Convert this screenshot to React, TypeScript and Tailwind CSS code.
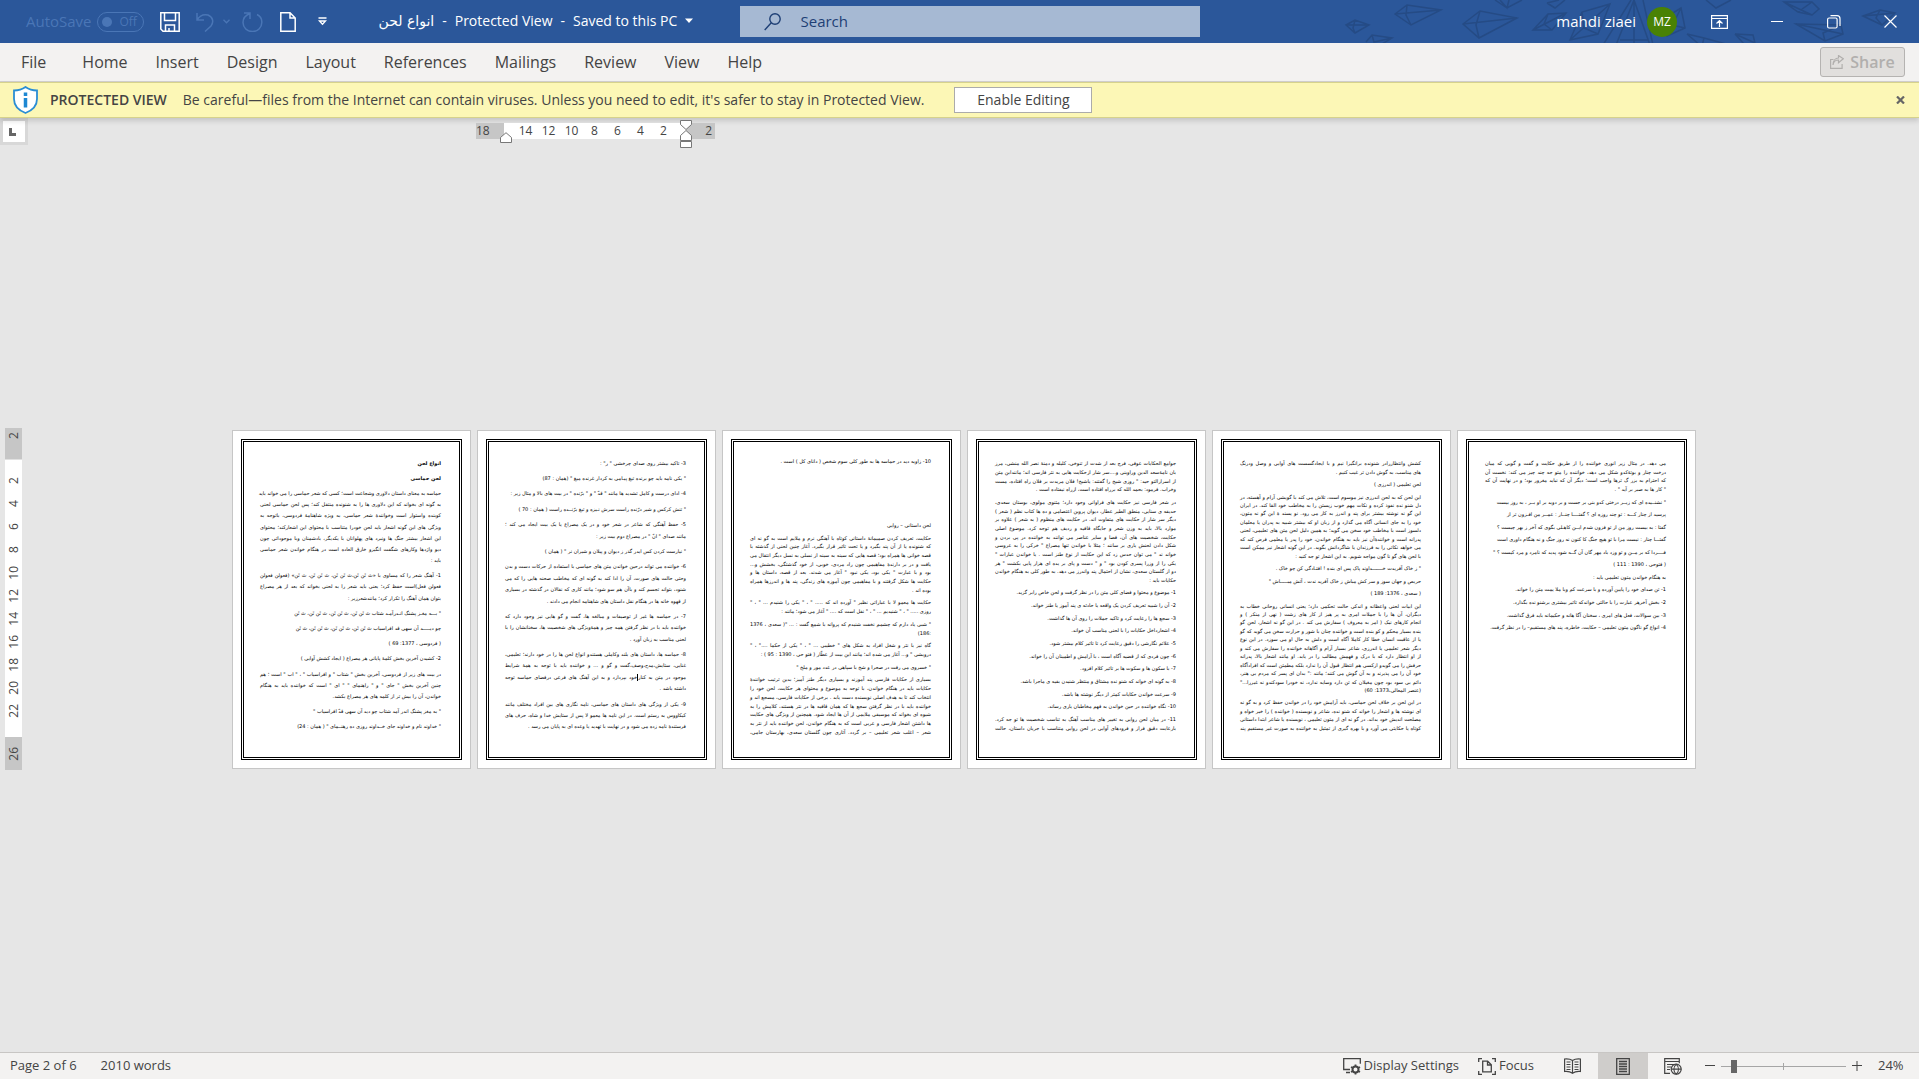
import { useState } from 'react';
import clsx from 'clsx';

type Paragraph = {
  lines: string[];
  bold?: boolean;
  // the paragraph runs on to the next page, so its last line is justified too
  runsOn?: boolean;
};

type DocPage = { spacing: 'wide' | 'full' | 'tight'; paragraphs: Paragraph[] };

const tabs = ['File', 'Home', 'Insert', 'Design', 'Layout', 'References', 'Mailings', 'Review', 'View', 'Help'];
const rulerColumns = [14, 12, 10, 8, 6, 4, 2];
const rulerRows = [2, 4, 6, 8, 10, 12, 14, 16, 18, 20, 22];

const blank = (count: number): Paragraph[] => Array.from({ length: count }, () => ({ lines: [''] }));

const pages: DocPage[] = [
  {
    spacing: 'wide',
    paragraphs: [
      { lines: ['انواع لحن'], bold: true },
      { lines: ['لحن حماسی'], bold: true },
      {
        lines: [
          'حماسه به معنای داستان دلاوری وشجاعت است؛ کسی که شعر حماسی را می خواند باید',
          'به گونه ای بخواند که این دلاوری ها را به شنونده منتقل کند؛ پس لحن حماسی لحنی',
          'کوبنده واستوار است وخوانندۀ شعر حماسی، به ویژه شاهنامۀ فردوسی، باتوجه به',
          'ویژگی های این گونه اشعار باید لحن خودرا متناسب با محتوای این اشعارکند؛ محتوای',
          'این اشعار بیشتر جنگ ها ونبرد های پهلوانان با یکدیگر، بادشمنان وبا موجوداتی چون',
          'دیو واژدها وکارهای شگفت انگیزو خارق العاده است در هنگام خواندن شعر حماسی',
          'باید :',
        ],
      },
      {
        lines: [
          '1- آهنگ شعر را که مساوی با «تَ تَن تَن،تَ تَن تَن، تَ تَن تَن، تَ تَن» (فعولن فعولن',
          'فعولن فعل)است حفظ کرد؛ یعنی باید شعر را به لحنی بخواند که بعد از هر مصراع',
          'بتوان همان آهنگ را تکرار کرد؛ مانندشعرزیر :',
        ],
      },
      { lines: ['" بـــه مغـز پشنگ انـدرآمـد شتاب تَ تَن تَن، تَ تَن تَن، تَ تَن تَن، تَ تَن'] },
      { lines: ['چو دیـــــد آن سهی قد افراسیاب تَ تَن تَن، تَ تَن تَن، تَ تَن تَن، تَ تَن'] },
      { lines: ['( فردوسی ، 1377: 69 )'] },
      { lines: ['2- کشیدن آخرین بخش کلمۀ پایانی هر مصراع ( ایجاد کشش آوایی )'] },
      {
        lines: [
          'در بیت های زیر از فردوسی، آخرین بخش " شتاب " و افراسیاب " ، " اب " است ؛ هم',
          'چنین آخرین بخش " جای " و " راهنمای " " ای " است که خواننده باید به هنگام',
          'خواندن، آن را بیش تر از کلمه های هر مصراع بکشد.',
        ],
      },
      { lines: ['" به مغز پشنگ اندر آمد شتاب چو دید آن سهی قدّ افراسیاب "'] },
      { lines: ['" خداوند نام و خداوند جای خــداوند روزی ده رهنــمای " ( همان : 24)'] },
    ],
  },
  {
    spacing: 'wide',
    paragraphs: [
      { lines: ['3- تاکید بیشتر روی صدای چرخشی " ر" :'] },
      { lines: ['" یکی نامه باید چو برنده تیغ پیـامی به کردار غرنده میغ " (همان : 87)'] },
      { lines: ['4- ادای درست و کامل تشدید ها مانند " قدّ " و " برّنده " در بیت های بالا و مثال زیر :'] },
      { lines: ['" تنش کرکس و شیر درّنده راست سرش نـیزه و تیغ برّنــده راست ( همان : 70 )'] },
      {
        lines: [
          '5- حفظ آهنگی که شاعر در شعر خود و در یک مصراع یا یک بیت ایجاد می کند ؛',
          'مانند صدای " انّ " در مصراع دوم بیت زیر :',
        ],
      },
      { lines: ['" نیارست کردن کس ایدر گذر ز دیوان و پیلان و شیران نر " ( همان )'] },
      {
        lines: [
          '6- خواننده می تواند درحین خواندن متن های حماسی با استفاده از حرکات دست و بدن',
          'وحتی حالت های صورت، آن را ادا کند به گونه ای که مخاطب صحنه هایی را که می',
          'شنود، بتواند تجسم کند و باآن هم سو شود؛ مانند کاری که نقالان در گذشته در بسیاری',
          'از قهوه خانه ها در هنگام نقل داستان های شاهنامه انجام می دادند .',
        ],
      },
      {
        lines: [
          '7- در حماسه ها غیر از توصیفات و مبالغه ها، گفت و گو هایی نیز وجود دارد که',
          'خواننده باید با در نظر گرفتن همه چیز و همۀویژگی های شخصیت ها، سخنانشان را با',
          'لحنی مناسب به زبان آورد .',
        ],
      },
      {
        lines: [
          '8- حماسه ها، داستان های بلند وکاملی هستندو انواع لحن ها را در خود دارند؛ تعلیمی،',
          'غنایی، ستایش،مدح،وصف،گفت و گو و ... و خواننده باید با توجه به همۀ شرایط',
          'موجود در متن به کنار|خود بپردازد و به این آهنگ های فرعی درفضای حماسه توجه',
          'داشته باشد .',
        ],
      },
      {
        lines: [
          '9- یکی از ویژگی های داستان های حماسی، نامه نگاری های بین افراد مختلف مانند',
          'کیکاووس به رستم است. در این نامه ها معمو لا پس از ستایش خدا و شاه، حرف های',
          'فرستندۀ نامه زده می شود و در نهایت با تهدید یا وعده ای به پایان می رسد .',
        ],
      },
    ],
  },
  {
    spacing: 'full',
    paragraphs: [
      { lines: ['10- زاویه دید در حماسه ها به طور کلی سوم شخص ( دانای کل ) است .'] },
      ...blank(4),
      { lines: ['لحن داستانی – روایی'] },
      {
        lines: [
          'حکایت، تعریف کردن صمیمانۀ داستانی کوتاه با آهنگی نرم و ملایم است به گو نه ای',
          'که شنونده یا از آن پند بگیرد و یا تحت تاثیر قرار بگیرد. آغاز چنین لحنی از گذشته با',
          'قصه خوانی ها همراه بود؛ قصه هایی که سینه به سینه از نسلی به نسل دیگر انتقال می',
          'یافت و در بر دارندۀ مفاهیمی چون راد مردی، خوبی، از خود گذشتگی، بخشش و...',
          'بود و با عبارت " یکی بود، یکی نبود " آغاز می شدند. بعد از قصه، داستان ها و',
          'حکایت ها شکل گرفتند و با مفاهیمی چون آموزه های زندگی، پند ها و اندرزها همراه',
          'بوده اند .',
        ],
      },
      {
        lines: [
          'حکایت ها معمو لا با عباراتی نظیر " آورده اند که ..... " ، " یکی را شنیدم ... " ، "',
          'روزی ..... " ، " شنیدیم ... " ، " نقل است که .... " آغاز می شود؛ مانند :',
        ],
      },
      { lines: ['" شبی یاد دارم که چشمم نخفت شنیدم که پروانه با شمع گفت : ... "( سعدی ، 1376', ':186)'] },
      {
        lines: [
          'گاه نیز با نثر و شغل افراد به شکل های " خطیبی ... " ، " یکی از حکما ...." ، "',
          'درویشی " و... آغاز می شده اند؛ مانند این بیت از عطّار ( فتو حی ، 1390 : 95 ) :',
        ],
      },
      { lines: ['" خسروی می رفت در صحرا و شخ با سپاهی در عدد مور و ملخ "'] },
      {
        runsOn: true,
        lines: [
          'بسیاری از حکایات فارسی پند آموزند و بسیاری دیگر طنز آمیز؛ بدین ترتیب خوانندۀ',
          'حکایات باید در هنگام خواندن، با توجه به موضوع و محتوای هر حکایت، لحن خود را',
          'انتخاب کند تا به هدف اصلی نویسنده دست یابد . برخی از حکایات فارسی، مسجع اند و',
          'خواننده باید با در نظر گرفتن سجع ها که همان قافیه ها در نثر هستند، کلامش را به',
          'شیوه ای بخواند که موسیقی ملایمی از آن ها ایجاد شود. همچنین از ویژگی های حکایت',
          'ها داشتن اشعار فارسی و عربی است که به هنگام خواندن، لحن خواننده باید از نثر به',
          'شعر – اغلب شعر تعلیمی – بر گردد. آثاری چون گلستان سعدی، بهارستان جامی،',
        ],
      },
    ],
  },
  {
    spacing: 'tight',
    paragraphs: [
      {
        lines: [
          'جوامع الحکایات عوفی، فرج بعد از شدت از تنوخی، کلیله و دمنۀ نصر الله منشی، مرز',
          'بان نامۀسعد الدین وراوینی و....سر شار ازحکایت هایی به نثر فارسی اند؛ مانندابن متن',
          'از اسرارالتو حید: " روزی شیخ را گفتند: یاشیخ! فلان مریدت بر فلان راه افتاده، مست',
          'وخراب. فرمود: بحمد الله که برراه افتاده است، ازراه نیفتاده است .',
        ],
      },
      {
        lines: [
          'در شعر فارسی نیز حکایت های فراوانی وجود دارد؛ مثنوی مولوی، بوستان سعدی،',
          'حدیقه ی سنایی، منطق الطیر عطار، دیوان پروین اعتصامی و ده ها کتاب نظم ( شعر )',
          'دیگر سر شار از حکایت های متفاوت اند. در حکایت های منظوم ( به شعر ) علاوه بر',
          'موارد بالا، باید به وزن شعر و جایگاه قافیه و ردیف هم توجه کرد. موضوع اصلی',
          'حکایت، شخصیت های آن، فضا و سایر عناصر می توانند به خواننده در پی بردن و',
          'شکل دادن لحنش یاری بر سانند ؛ مثلا با خواندن تنها مصراع " خرکی را به عروسی',
          'خواند ند " می توان حدس زد که این حکایت از نوع طنز است . یا خواندن عبارات "',
          'یکی را از وزرا پسری کودن بود " و " دست و پای بر یده ای هزار پایی بکشت " هر',
          'دو از گلستان سعدی، نشان از احتمال پند واندرز می دهد. به طور کلی به هنگام خواندن',
          'حکایات باید :',
        ],
      },
      { lines: ['1- موضوع و محتوا و فضای کلی متن را در نظر گرفت و لحن خاص رابر گزید.'] },
      { lines: ['2- آن را شبیه تعریف کردن یک واقعه یا حادثه ی پند آموز یا طنز خواند.'] },
      { lines: ['3- سجع ها را رعایت کرد و تاکید جملات را روی آن ها گذاشت.'] },
      { lines: ['4- اشعارداخل حکایات را با لحنی مناسب آن خواند.'] },
      { lines: ['5- علائم نگارشی را دقیق رعایت کرد تا تاثیر کلام بیشتر شود.'] },
      { lines: ['6- چون فردی که از قضیه آگاه است ، با آرامش و اطمینان آن را خواند.'] },
      { lines: ['7- با سکون ها و سکوت ها بر تاثیر کلام افزود.'] },
      { lines: ['8- به گونه ای خواند که شنو نده مشتاق و منتظر شنیدن بقیه ی ماجرا باشد.'] },
      { lines: ['9- سرعت خواندن حکایات کمتر از دیگر نوشته ها باشد.'] },
      { lines: ['10- نگاه خواننده در حین خواندن به فهم مخاطبان یاری رساند.'] },
      {
        runsOn: true,
        lines: [
          '11- در میان لحن روایی به تغییر های مناسب آهنگ به تناسب شخصیت ها تو جه کرد.',
          'بارعایت دقیق فراز و فرودهای آوایی در لحن روایی متناسب با جریان داستان، حالت',
        ],
      },
    ],
  },
  {
    spacing: 'tight',
    paragraphs: [
      {
        lines: [
          'کشش وانتظاررادر شنونده برانگیزا نیم و با ایجادگسست های آوایی و وصل ودرنگ',
          'های مناسب، به گوش دادن تر غیب کنیم .',
        ],
      },
      { lines: ['لحن تعلیمی ( اندرزی )'] },
      {
        lines: [
          'این لحن که به لحن اندرزی نیز موسوم است، تلاش می کند با گویشی آرام و آهسته، در',
          'دل شنو نده نفوذ کرده و نکات مهم خوب زیستن را به مخاطب خود القا کند. در ایران',
          'این گو نه نوشته بیشتر برای پند و اندرز به کار می رود. نو یسند ۀ این گو نه متون،',
          'خود را به جای انسانی آگاه می گذارد و از زبان او که بیشتر شبیه به پدران یا معلمان',
          'دلسوز است با مخاطب خود سخن می گوید؛ به همین دلیل لحن متن های تعلیمی، لحنی',
          'پدرانه است و خوانندۀآن نیز باید به هنگام خواندن، خود را پدر یا معلمی فرض کند که',
          'می خواهد نکاتی را به فرزندان یا شاگردانش بگوید. در این گونه اشعار نیز ممکن است',
          'با لحن های گو نا گون مواجه شویم. به این اشعار تو جه کنید :',
        ],
      },
      { lines: ['" ز خاک آفریدت خـــــــداوند پاک پس ای بنده ! افتـادگی کن چو خاک .'] },
      { lines: ['حریص و جهان سوز و سر کش مباش ز خاک آفرید ندت ، آتش مبـــــاش "'] },
      { lines: ['( سعدی ، 1376: 189 )'] },
      {
        lines: [
          'این ابیات لحنی واعظانه و اندکی حالت تحکمی دارد؛ یعنی انسانی روحانی خطاب به',
          'دیگران، آن ها را با جملات امری به پر هیز از کار های زشت ( نهی از منکر ) و',
          'انجام کارهای نیک ( امر به معروف ) سفارش می کند . در این گو نه اشعار، لحن گو',
          'ینده بسیار محکم و کو بنده است و خواننده چنان با شور و حرارت سخن می گوید که گو',
          'یا از عاقبت انسان خطا کار کاملا آگاه است و دلش به حال او می سوزد. در این نوع',
          'دیگر شعر تعلیمی یا اندرزی، شاعر بسیار آرام و آگاهانه خواننده را سفارش می کند و',
          'از او انتظار دارد که با درک و فهمش مطالب را در یابد. او مانند اشعار بالا، پدرانه',
          'حرفش را می گویدو ازکسی هم انتظار قبول آن را ندارد بلکه مطمئن است که افرادآگاه',
          'خود آن را می پذیرند و به آن گوش می کنند؛ مانند :" بدان ای پسر که مردم بی هنر،',
          'دائم بی سود بود چون مغیلان که تن دارد وسایه ندارد، نه خودرا سودکندو نه غیررا..."',
          '(عنصر المعالی،1373: 60)',
        ],
      },
      {
        runsOn: true,
        lines: [
          'در این لحن بر خلاف لحن حماسی، باید آرامش خود را در خواندن حفظ کرد و به گو نه',
          'ای نوشته ها و اشعار را خواند که شنو نده، شاعر و نویسنده ( خواننده ) را خیر خواه و',
          'مصلحت اندیش خود بداند. در گو نه ای از متون تعلیمی ، نویسنده یا شاعر ابتدا داستانی',
          'کوتاه یا حکایتی می آورد و با بهره گیری از تمثیل به خواننده به صورت غیر مستقیم پند',
        ],
      },
    ],
  },
  {
    spacing: 'tight',
    paragraphs: [
      {
        lines: [
          'می دهد. در مثال زیر انوری خواننده را از طریق حکایت و گفت و گویی که میان',
          'درخت چنار و بوتۀکدو شکل می دهد، خواننده را متو جه چند چیز می کند: نخست آن',
          'که احترام به بزر گ ترها واجب است؛ دیگر آن که نباید مغرور بود؛ و در نهایت آن که',
          '" کار ها به صبر بر آید " .',
        ],
      },
      { lines: ['" نشنــیده ای که زیــر درختی کدو بنی بر جست و بر دوید بر او بــر ، به روز بیست'] },
      { lines: ['پرسید از چنار کـــه : تو چند روزه ای ؟ گفتــــا چنــار : عمــر من افـزون تر از'] },
      { lines: ['گفتا : به بیست روز من از تو فزون شدم ایــن کاهـلی بگوی که آخر ز بهر چیست ؟'] },
      { lines: ['گفتـــا چنار : نیست مرا با تو هیچ جنگ کا کنون نه روز جنگ و نه هنگام داوری است'] },
      { lines: ['فــــردا که بر مــن و تو وزد باد مهر گان آن گــه شود پدید که نامرد و مرد کیست ؟ "'] },
      { lines: ['( فتوحی ، 1390 : 111 )'] },
      { lines: ['به هنگام خواندن متون تعلیمی باید :'] },
      { lines: ['1- تن صدای خود را پایین آورده و با سرعت کم وبا ملا یمت متن را خواند.'] },
      { lines: ['2- بخش آخرهر عبارت را با حالتی خواندکه تاثیر بیشتری برشنو نده بگذارد.'] },
      { lines: ['3- بین سوالات، فعل های امری ، سخنان آگا هانه و حکیمانه باید فرق گذاشت.'] },
      { lines: ['4- انواع گو ناگون متون تعلیمی – حکایت، خاطره، پند های مستقیم– را در نظر گرفت.'] },
      ...blank(8),
    ],
  },
];

function PaperPlanes() {
  return (
    <svg className="absolute right-0 top-0 h-full w-[599px]" viewBox="0 0 599 43" fill="none" stroke="#254b85" strokeWidth="1.500">
      <path d="M26 25 35 20 49 25 35 33zM26 25h23M35 20l-2 8 2 5" />
      <path d="M75 14 87 5l34 5-30 15zM75 14l46-4M87 5l-1 10 5 10" />
      <path d="M143 24l17-13 37 7-38 20zM143 24l54-6M160 11l-4 14 3 13" />
      <path d="M46 42l6-7 20 3-10 6M52 35l2 7 18-4" />
      <path d="M175 0l12 8 15-8M180 0l7 8 2-8M227 3l8 5 10-8M227 3l12-3" />
      <path d="M213 30l15-16 18-1-14 17zM213 30l33-17M228 14l-4 10 8 6" />
      <path d="M250 40l12-28 28-8-12 30zM250 40l40-36M262 12l2 16 14 6" />
      <path d="M283 45l28-45M296 45l18-45 16 45M314 0v45M300 40h28M333 45l-10-45" />
      <path d="M338 22l23-14 4 20-18 8zM338 22l27 6M361 8l-14 28" />
      <path d="M367 34l17 4 22 6M367 34l14 12M384 38l-2 8" />
      <path d="M386 0l10 8 15-8M464 2l28 0 7 7-7 6-14-3zM464 2l28 13M492 2l-14 10" />
      <path d="M476 24l45 1 2 9-18 7zM476 24l47 10M521 25l-18 8 2 8" />
      <path d="M415 34l18 1 2 8M415 34l9 10M415 34l20 9" />
      <path d="M543 16l17-6 15 3-13 12zM543 16l32-3M560 10l-4 8 6 7" />
    </svg>
  );
}

function TitleBar() {
  return (
    <header className="relative flex h-[43px] shrink-0 items-center bg-[#2b579a] text-white">
      <PaperPlanes />
      <div className="relative flex flex-1 items-center">
        <label className="ml-[26px] flex items-center gap-[5px] text-[15px] text-[#4a76b6]">
          AutoSave
          <input type="checkbox" disabled className="sr-only" />
          <span className="flex h-5 w-[47px] items-center gap-2 rounded-full border border-[#4a76b6] pl-1 text-xs">
            <span className="h-[10px] w-[10px] rounded-full bg-[#4a76b6]" />
            Off
          </span>
        </label>
        <button aria-label="Save" className="ml-4">
          <svg width="20" height="20" viewBox="0 0 20 20" fill="none" stroke="currentColor" strokeWidth="1.5">
            <path d="M.8.8h18.4v18.4H3L.8 17zM4.500.8v7.700h11V.8M5.500 19v-6h9v6M9 19v-3" />
          </svg>
        </button>
        <button aria-label="Undo" disabled className="ml-4 text-[#4a76b6]">
          <svg width="18" height="20" viewBox="0 0 18 20" fill="none" stroke="currentColor" strokeWidth="1.500">
            <path d="M1 1v7h7M1 8C4 3 8 2 12 3c5 2 6 7 3 11l-6 5.500" />
          </svg>
        </button>
        <svg className="ml-[9px] text-[#4a76b6]" width="7" height="5" viewBox="0 0 7 5" fill="none" stroke="currentColor" strokeWidth="1.300">
          <path d="M.5.8l3 3 3-3" />
        </svg>
        <button aria-label="Repeat" disabled className="ml-3 text-[#4a76b6]">
          <svg width="21" height="20" viewBox="0 0 21 20" fill="none" stroke="currentColor" strokeWidth="1.500">
            <path d="M2 1h6v6M8 1.500C4 3 1 6 1 10.500a9.300 9 0 0 0 18.800 0C20 7 18 4 15 2.500" />
          </svg>
        </button>
        <button aria-label="New document" className="ml-[17px]">
          <svg width="16" height="20" viewBox="0 0 16 20" fill="none" stroke="currentColor" strokeWidth="1.500">
            <path d="M.8.8H10l5.200 5.200v13.200H.8zM10 .8V6h5.200" />
          </svg>
        </button>
        <button aria-label="Customize toolbar" className="ml-[22px]">
          <svg width="9" height="9" viewBox="0 0 9 9" fill="none" stroke="currentColor" strokeWidth="1.300">
            <path d="M.5 1h8M1.500 4l3 3.200 3-3.200z" />
          </svg>
        </button>
        <button className="ml-[52px] flex items-center gap-2 whitespace-nowrap pb-[2px] text-sm">
          <span dir="rtl" lang="fa" className="font-[DejaVu_Sans]">انواع لحن</span>
          <span>-</span>
          <span>Protected View</span>
          <span>-</span>
          <span>Saved to this PC</span>
          <svg width="8" height="5" viewBox="0 0 8 5" fill="currentColor">
            <path d="M0 .5h8L4 5z" />
          </svg>
        </button>
      </div>
      <label className="relative ml-[42px] flex h-[31px] w-[460px] items-center gap-5 bg-[#a6b9d3] pl-6 text-[#1e3f75]">
        <svg width="17" height="18" viewBox="0 0 17 18" fill="none" stroke="currentColor" strokeWidth="1.400">
          <circle cx="11" cy="6" r="5.200" />
          <path d="M7.300 9.800.7 17" />
        </svg>
        <input
          type="search"
          aria-label="Search"
          placeholder="Search"
          className="min-w-0 flex-1 bg-transparent text-[15px] outline-none placeholder:text-[#1e3f75]"
        />
      </label>
      <div className="relative flex flex-1 items-center justify-end pr-[22px]">
        <button className="flex items-center gap-[11px] text-[15px]">
          mahdi ziaei
          <span className="flex h-[30px] w-[30px] items-center justify-center rounded-full bg-[#498205] text-xs">MZ</span>
        </button>
        <button aria-label="Ribbon display options" className="ml-[34px]">
          <svg width="17" height="14" viewBox="0 0 17 14" fill="none" stroke="currentColor" strokeWidth="1.200">
            <path d="M.6.6h15.800v12.800H.6zM.6 3.500h15.800M8.500 12V6M5.500 8.500l3-3 3 3" />
          </svg>
        </button>
        <button aria-label="Minimize" className="ml-[43px] h-px w-3 bg-white" />
        <button aria-label="Restore" className="ml-[44px]">
          <svg width="14" height="14" viewBox="0 0 14 14" fill="none" stroke="currentColor" strokeWidth="1.200">
            <rect x=".6" y="3" width="9.500" height="10" rx="1.500" />
            <path d="M3.500.7h6.500a3 3 0 0 1 3 3V11" />
          </svg>
        </button>
        <button aria-label="Close" className="ml-[43px]">
          <svg width="13" height="13" viewBox="0 0 13 13" fill="none" stroke="currentColor" strokeWidth="1.200">
            <path d="M.5.5l12 12M12.500.5l-12 12" />
          </svg>
        </button>
      </div>
    </header>
  );
}

function RibbonTabs() {
  return (
    <nav className="flex h-[39px] shrink-0 items-center border-b border-[#d2d0ce] bg-[#f3f2f1] pl-[21px] pr-[14px] text-base text-[#444]">
      {tabs.map((tab) => (
        <button key={tab} className={clsx('whitespace-nowrap', tab === 'File' ? 'mr-9' : 'mr-7')}>
          {tab}
        </button>
      ))}
      <button disabled className="ml-auto flex h-[30px] w-[85px] items-center justify-center gap-[6px] rounded-[3px] border border-[#b5b3b1] bg-[#e1dfdd] font-semibold text-[#b1afad]">
        <svg width="14" height="14" viewBox="0 0 14 14" fill="none" stroke="currentColor" strokeWidth="1.200">
          <path d="M3.500 4.500H.6v8.900h11.500V9M3 10c.5-3.500 2.500-5 5.500-5V7.700L13.300 3.800 8.500.5V3C5.500 3 3 5.500 3 10z" />
        </svg>
        Share
      </button>
    </nav>
  );
}

function MessageBar({ onClose }: { onClose: () => void }) {
  return (
    <div className="relative flex h-9 shrink-0 items-center border-y border-[#d6d28c] bg-[#fcf7b6] pl-[13px] pr-[14px] text-sm text-[#444] shadow-[0_3px_5px_rgba(0,0,0,0.14)]">
      <svg width="25" height="28" viewBox="0 0 25 28" fill="none">
        <path d="M12.500 1C9 3.500 5 4.500 1 4.500V13c0 7 5 11.500 11.500 14C19 24.500 24 20 24 13V4.500C20 4.500 16 3.500 12.500 1z" fill="#fff" stroke="#2a8dd4" strokeWidth="1.800" />
        <path d="M12.500 6.500v3.500M12.500 12v9.500" stroke="#1e88d2" strokeWidth="3.500" />
      </svg>
      <span className="ml-3 font-semibold">PROTECTED VIEW</span>
      <span className="ml-4">
        Be careful—files from the Internet can contain viruses. Unless you need to edit, it's safer to stay in Protected View.
      </span>
      <button className="ml-[30px] h-[26px] w-[138px] border border-[#ababab] bg-white">Enable Editing</button>
      <button aria-label="Close message" onClick={onClose} className="ml-auto">
        <svg width="9" height="8" viewBox="0 0 9 8" fill="none" stroke="#666" strokeWidth="2.200">
          <path d="M1 .5l7 7M8 .5l-7 7" />
        </svg>
      </button>
    </div>
  );
}

function HorizontalRuler() {
  return (
    <div className="relative flex h-4 w-[239px] text-xs leading-4 text-[#444]">
      <div className="w-[28px] bg-[#c6c6c6]">18</div>
      <div className="flex flex-1 bg-white pl-[10px]">
        {rulerColumns.map((n) => (
          <span key={n} className="w-[23px] text-center">{n}</span>
        ))}
      </div>
      <div className="w-[29px] bg-[#c6c6c6] pr-[3px] text-right">2</div>
      <svg className="absolute left-[24px] top-[9px]" width="12" height="11" viewBox="0 0 12 11" fill="#fff" stroke="#777">
        <path d="M.5 10.500V5.500L6 .7l5.500 4.800v5z" />
      </svg>
      <svg className="absolute -top-[3px] right-[23px]" width="12" height="28" viewBox="0 0 12 28" fill="#fff" stroke="#777">
        <path d="M.5.5h11v4L6 9.500.5 4.500zM.5 20.500v-5L6 10.500l5.500 5v5zM.5 21.500h11v6H.5z" />
      </svg>
    </div>
  );
}

function VerticalRuler() {
  return (
    <div className="w-[17px] text-xs leading-[17px] text-[#444]">
      <div className="flex h-8 items-start justify-center border-b border-[#e1e1e1] bg-[#c6c6c6] pt-1">
        <span className="rotate-180 [writing-mode:vertical-rl]">2</span>
      </div>
      <div className="h-[277px] bg-white pt-[9px]">
        {rulerRows.map((n) => (
          <div key={n} className="flex h-[23px] items-center justify-center">
            <span className="rotate-180 [writing-mode:vertical-rl]">{n}</span>
          </div>
        ))}
      </div>
      <div className="flex h-[33px] items-center justify-center bg-[#c6c6c6]">
        <span className="rotate-180 [writing-mode:vertical-rl]">26</span>
      </div>
    </div>
  );
}

function TextLine({ text }: { text: string }) {
  const [before, after] = text.split('|');
  if (after === undefined) return <>{text}</>;
  return (
    <>
      {before}
      <span className="inline-block h-[7px] w-px bg-black align-middle" />
      {after}
    </>
  );
}

function PageThumb({ page }: { page: DocPage }) {
  return (
    <article className="h-[339px] w-[239px] border border-[#c6c6c6] bg-white p-2">
      <div
        dir="rtl"
        lang="fa"
        className={clsx(
          'flex h-full flex-col gap-1 border-[3px] border-double border-black pl-4 pr-[18px] font-[DejaVu_Sans] text-[5px] leading-none text-black',
          page.spacing === 'wide' && 'pb-6 pt-4',
          page.spacing === 'full' && 'pb-5 pt-4',
          page.spacing === 'tight' && 'pb-6 pt-[18px]'
        )}
      >
        {page.paragraphs.map((p, i) => (
          <div key={i} className="flex basis-0 flex-col" style={{ flexGrow: p.lines.length }}>
            {p.lines.map((line, li) => (
              <div key={li} className="flex flex-1 items-center">
                <p
                  className={clsx(
                    'w-full whitespace-nowrap',
                    p.bold && 'font-bold',
                    (p.runsOn || li < p.lines.length - 1) && '[text-align-last:justify]'
                  )}
                >
                  <TextLine text={line} />
                </p>
              </div>
            ))}
          </div>
        ))}
      </div>
    </article>
  );
}

function StatusBar() {
  const [zoom, setZoom] = useState(8);

  return (
    <footer className="flex h-[27px] shrink-0 items-center border-t border-[#c8c6c4] bg-[#f3f2f1] pl-[10px] pr-[17px] text-[13px] text-[#444]">
      <span>Page 2 of 6</span>
      <span className="ml-6">2010 words</span>
      <button className="ml-auto flex items-center gap-[3px]">
        <svg width="18" height="17" viewBox="0 0 18 17" fill="none" stroke="#444" strokeWidth="1.300">
          <path d="M7 11.500H.7V.7h16.600v5M3 14.500h4" />
          <circle cx="12.500" cy="11.500" r="3" strokeWidth="2" />
          <path d="M12.500 6.500v2M12.500 14.500v2M8 9l2 1M15 13l2 1M17 9l-2 1M10 13l-2 1" strokeWidth="1.800" />
        </svg>
        Display Settings
      </button>
      <button className="ml-[19px] flex items-center gap-[3px]">
        <svg width="18" height="17" viewBox="0 0 18 17" fill="none" stroke="#444" strokeWidth="1.300">
          <path d="M4 .7H.7V4M14 .7h3.300V4M.7 13v3.300H4M17.300 13v3.300H14M4.700 3.200h5l3.600 3.600v7H4.700zM9.500 3.200v3.800h3.800" />
        </svg>
        Focus
      </button>
      <button aria-label="Read mode" className="ml-[30px]">
        <svg width="17" height="16" viewBox="0 0 17 16" fill="none" stroke="#444" strokeWidth="1.200">
          <path d="M8.500 2.500C6 .8 3 .8.6 1v12.500c3-.3 5.500 0 7.900 1.800 2.400-1.800 5-2.100 7.900-1.800V1C14 .8 11 .8 8.500 2.500zM8.500 2.500v13M2.500 4h4M2.500 6.500h4M2.500 9h4M2.500 11.500h4M10.500 4h4M10.500 6.500h4M10.500 9h4M10.500 11.500h4" />
        </svg>
      </button>
      <button aria-label="Print layout" className="ml-[17px] flex h-full w-[50px] items-center justify-center bg-[#cfcdcb]">
        <svg width="14" height="17" viewBox="0 0 14 17" fill="none" stroke="#444" strokeWidth="1.300">
          <path d="M.7.7h12.600v15.600H.7zM3 3.500h8M3 6h8M3 8.500h8M3 11h8M3 13.500h8" />
        </svg>
      </button>
      <button aria-label="Web layout" className="ml-4">
        <svg width="18" height="17" viewBox="0 0 18 17" fill="none" stroke="#444" strokeWidth="1.200">
          <path d="M6 15.300H.7V.7h14.600v4.500M.7 3.500h14.600M3 6.500h7M3 9h4M3 11.500h3" />
          <circle cx="12.200" cy="11.200" r="5" />
          <path d="M7.200 11.200h10M12.200 6.200c-3 3-3 7 0 10 3-3 3-7 0-10" />
        </svg>
      </button>
      <button aria-label="Zoom out" className="ml-[23px]">
        <svg width="10" height="10" viewBox="0 0 10 10" stroke="#444"><path d="M0 4.500h10" /></svg>
      </button>
      <div className="relative ml-[6px] flex items-center">
        <span className="absolute left-[62px] h-[7px] w-px bg-[#a6a6a6]" />
        <input
          type="range"
          aria-label="Zoom"
          min={0}
          max={100}
          value={zoom}
          onChange={(e) => setZoom(Number(e.target.value))}
          className="h-[14px] w-[125px] appearance-none bg-transparent [&::-webkit-slider-runnable-track]:h-px [&::-webkit-slider-runnable-track]:bg-[#a6a6a6] [&::-webkit-slider-thumb]:-mt-[6px] [&::-webkit-slider-thumb]:h-[13px] [&::-webkit-slider-thumb]:w-[6px] [&::-webkit-slider-thumb]:appearance-none [&::-webkit-slider-thumb]:bg-[#666]"
        />
      </div>
      <button aria-label="Zoom in" className="ml-[6px]">
        <svg width="10" height="10" viewBox="0 0 10 10" stroke="#444"><path d="M0 4.500h10M5 0v10" /></svg>
      </button>
      <button className="ml-4 w-6 whitespace-nowrap">24%</button>
    </footer>
  );
}

export default function App() {
  const [showMessage, setShowMessage] = useState(true);

  return (
    <div className="flex h-screen flex-col overflow-hidden bg-[#e6e6e6] font-[Open_Sans,Noto_Sans,sans-serif]">
      <TitleBar />
      <RibbonTabs />
      {showMessage && <MessageBar onClose={() => setShowMessage(false)} />}

      <div className="flex h-[30px] shrink-0 items-start">
        <button aria-label="Tab selector" className="flex h-[27px] w-7 items-end border-[3px] border-[#d8d8d8] bg-white p-[6px]">
          <span className="h-2 w-[7px] border-b-[3px] border-l-[3px] border-[#666]" />
        </button>
        <div className="flex flex-1 justify-center pr-[19px] pt-[5px]">
          <div className="w-[1464px] pl-[244px]">
            <HorizontalRuler />
          </div>
        </div>
      </div>

      <main className="flex flex-1 items-center pb-[2px]">
        <div className="w-7 pl-[5px]">
          <VerticalRuler />
        </div>
        <div className="flex flex-1 justify-center gap-[6px] pr-[19px]">
          {pages.map((page, i) => (
            <PageThumb key={i} page={page} />
          ))}
        </div>
      </main>

      <StatusBar />
    </div>
  );
}
